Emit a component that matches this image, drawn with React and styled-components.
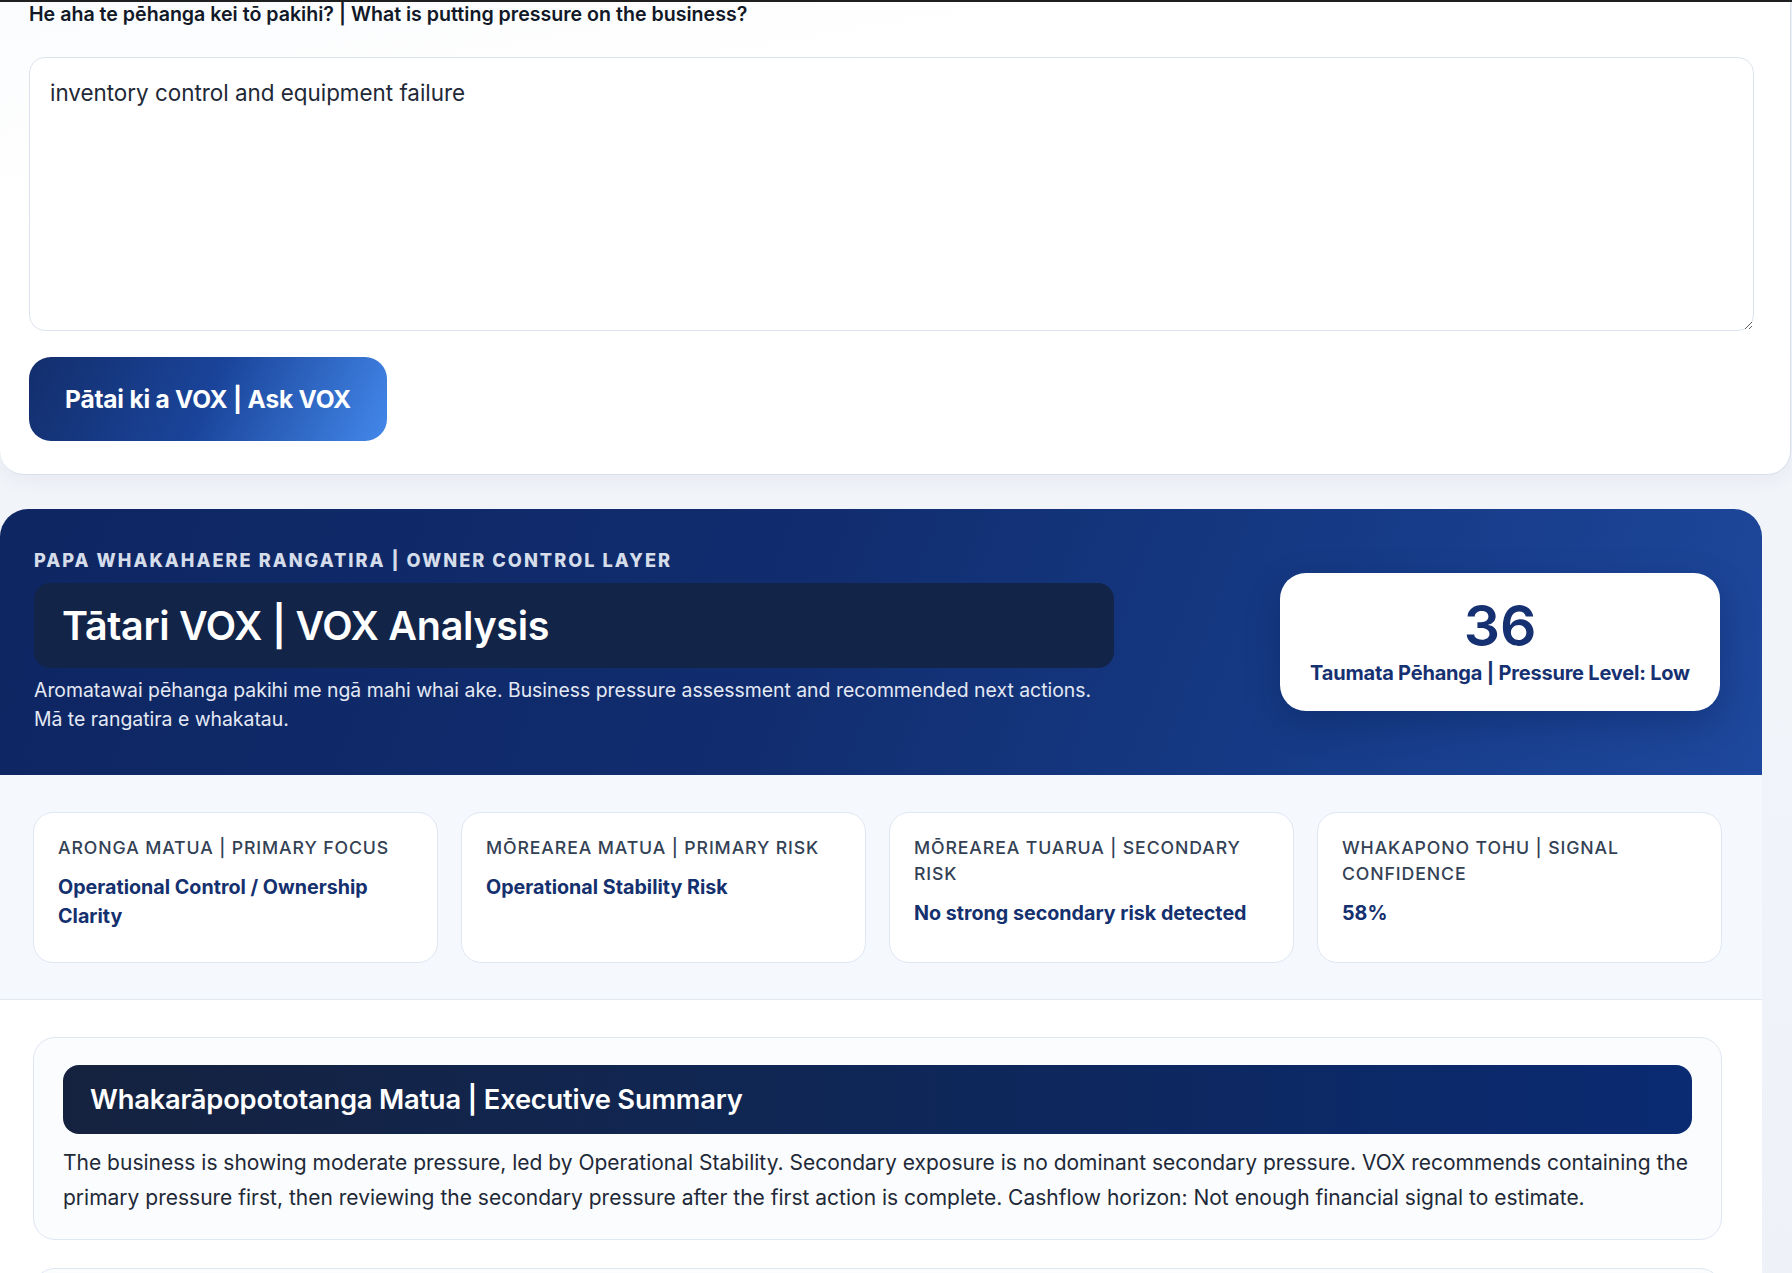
import React, { useState } from "react";
import styled, { createGlobalStyle } from "styled-components";

const GlobalStyle = createGlobalStyle`
  * { box-sizing: border-box; }
  body {
    margin: 0;
    background: linear-gradient(180deg, #f3f5f9 0%, #eef2f8 100%);
    font-family: Inter, "Noto Sans", "Liberation Sans", sans-serif;
    color: #111827;
  }
`;

const Page = styled.div`
  min-height: 1273px;
  border-top: 2px solid #1f1f1f;
  overflow: hidden;
`;

const AskCard = styled.section`
  width: 1791px;
  margin-top: -24px;
  padding: 24px 36px 33px 29px;
  background: linear-gradient(170deg, #fafbfd 0%, #ffffff 30%, #ffffff 100%);
  border: 1px solid #d9e1ec;
  border-top: none;
  border-left: none;
  border-radius: 0 0 24px 24px;
  box-shadow: 0 6px 18px rgba(30, 50, 90, 0.05);
`;

const Label = styled.label`
  display: block;
  font-size: 19.6px;
  font-weight: 600;
  line-height: 24px;
  color: #111827;
  margin-bottom: 31px;
`;

const TextArea = styled.textarea`
  display: block;
  width: 1725px;
  height: 274px;
  padding: 21px 20px;
  border: 1px solid #dde3ee;
  border-radius: 16px;
  font-family: Inter, "Noto Sans", sans-serif;
  font-size: 22.4px;
  line-height: 28px;
  color: #1f2937;
  background: #fff;
  resize: vertical;
  outline: none;
`;

const AskButton = styled.button`
  margin-top: 26px;
  width: 358px;
  height: 84px;
  border: none;
  border-radius: 22px;
  background: linear-gradient(115deg, #132e6c 0%, #1a449a 50%, #4388ea 100%);
  color: #fff;
  font-family: Inter, "Noto Sans", sans-serif;
  font-size: 24.5px;
  font-weight: 700;
  letter-spacing: -0.2px;
  cursor: pointer;
`;

const AnalysisCard = styled.section`
  width: 1762px;
  margin-top: 34px;
  border-radius: 28px 28px 0 0;
  overflow: hidden;
  background: #fff;
`;

const Hero = styled.div`
  display: flex;
  align-items: center;
  justify-content: space-between;
  height: 266px;
  padding: 0 42px 0 34px;
  background: linear-gradient(110deg, #0e2662 0%, #112d6f 45%, #163b87 75%, #1e489d 100%);
`;

const HeroText = styled.div`
  width: 1080px;
  margin-top: -1px;
`;

const Eyebrow = styled.div`
  font-size: 18.2px;
  font-weight: 800;
  letter-spacing: 0.11em;
  text-transform: uppercase;
  color: #d5dcea;
  line-height: 22px;
  margin-bottom: 12px;
`;

const TitlePill = styled.h1`
  margin: 0;
  height: 85px;
  display: flex;
  align-items: center;
  padding: 0 28px;
  border-radius: 16px;
  background: #132449;
  color: #fff;
  font-size: 39.5px;
  font-weight: 600;
  letter-spacing: -0.3px;
`;

const HeroDesc = styled.p`
  margin: 8px 0 0;
  font-size: 19.4px;
  line-height: 29px;
  color: #e4e9f4;
`;

const ScoreCard = styled.div`
  width: 440px;
  height: 138px;
  border-radius: 26px;
  background: #fff;
  box-shadow: 0 12px 34px rgba(5, 20, 60, 0.28);
  display: flex;
  flex-direction: column;
  align-items: center;
  justify-content: center;
  color: #163172;
`;

const ScoreValue = styled.div`
  font-size: 57px;
  font-weight: 600;
  line-height: 64px;
  margin-top: -6px;
`;

const ScoreLabel = styled.div`
  margin-top: 3px;
  font-size: 20px;
  font-weight: 700;
  line-height: 24px;
  letter-spacing: -0.2px;
`;

const StatsBand = styled.div`
  display: grid;
  grid-template-columns: repeat(4, 1fr);
  gap: 23px;
  padding: 37px 40px 36px 33px;
  background: #f5f8fd;
  border-bottom: 1px solid #e2e8f0;
`;

const StatCard = styled.div`
  height: 151px;
  padding: 22px 24px;
  background: #fff;
  border: 1px solid #dfe7f3;
  border-radius: 20px;
`;

const StatLabel = styled.div`
  font-size: 17.7px;
  font-weight: 500;
  line-height: 26px;
  letter-spacing: 0.05em;
  text-transform: uppercase;
  color: #334155;
`;

const StatValue = styled.div`
  margin-top: 12px;
  font-size: 19.7px;
  font-weight: 700;
  line-height: 29px;
  color: #14306e;
`;

const SummaryArea = styled.div`
  padding: 37px 40px 0 33px;
  display: flex;
  flex-direction: column;
  gap: 28px;
`;

const SummaryCard = styled.div`
  padding: 27px 29px 24px 29px;
  background: #fafcfe;
  border: 1px solid #dfe7f3;
  border-radius: 22px;
`;

const SummaryHeading = styled.h2`
  margin: 0;
  height: 69px;
  display: flex;
  align-items: center;
  padding: 0 27px;
  border-radius: 16px;
  background: linear-gradient(90deg, #15223f 0%, #0f2757 50%, #0a2a72 100%);
  color: #fff;
  font-size: 27.3px;
  font-weight: 600;
  letter-spacing: -0.2px;
`;

const SummaryText = styled.p`
  margin: 11px 0 0;
  font-size: 21px;
  line-height: 35px;
  color: #1f2937;
`;

const stats = [
  { label: "Aronga Matua | Primary Focus", value: "Operational Control / Ownership Clarity" },
  { label: "Mōrearea Matua | Primary Risk", value: "Operational Stability Risk" },
  { label: "Mōrearea Tuarua | Secondary Risk", value: "No strong secondary risk detected" },
  { label: "Whakapono Tohu | Signal Confidence", value: "58%" },
];

export default function App() {
  const [question, setQuestion] = useState("inventory control and equipment failure");

  return (
    <Page>
      <GlobalStyle />
      <AskCard>
        <Label htmlFor="vox-question">
          He aha te pēhanga kei tō pakihi? | What is putting pressure on the business?
        </Label>
        <TextArea
          id="vox-question"
          value={question}
          onChange={(e) => setQuestion(e.target.value)}
        />
        <AskButton>Pātai ki a VOX | Ask VOX</AskButton>
      </AskCard>

      <AnalysisCard>
        <Hero>
          <HeroText>
            <Eyebrow>Papa Whakahaere Rangatira | Owner Control Layer</Eyebrow>
            <TitlePill>Tātari VOX | VOX Analysis</TitlePill>
            <HeroDesc>
              Aromatawai pēhanga pakihi me ngā mahi whai ake. Business pressure assessment and recommended next actions.
              <br />
              Mā te rangatira e whakatau.
            </HeroDesc>
          </HeroText>
          <ScoreCard>
            <ScoreValue>36</ScoreValue>
            <ScoreLabel>Taumata Pēhanga | Pressure Level: Low</ScoreLabel>
          </ScoreCard>
        </Hero>

        <StatsBand>
          {stats.map((s) => (
            <StatCard key={s.label}>
              <StatLabel>{s.label}</StatLabel>
              <StatValue>{s.value}</StatValue>
            </StatCard>
          ))}
        </StatsBand>

        <SummaryArea>
          <SummaryCard>
            <SummaryHeading>Whakarāpopototanga Matua | Executive Summary</SummaryHeading>
            <SummaryText>
              The business is showing moderate pressure, led by Operational Stability. Secondary exposure is no dominant
              secondary pressure. VOX recommends containing the primary pressure first, then reviewing the secondary
              pressure after the first action is complete. Cashflow horizon: Not enough financial signal to estimate.
            </SummaryText>
          </SummaryCard>
          <SummaryCard>
            <SummaryHeading>Ngā Mahi Whai Ake | Recommended Next Actions</SummaryHeading>
          </SummaryCard>
        </SummaryArea>
      </AnalysisCard>
    </Page>
  );
}
